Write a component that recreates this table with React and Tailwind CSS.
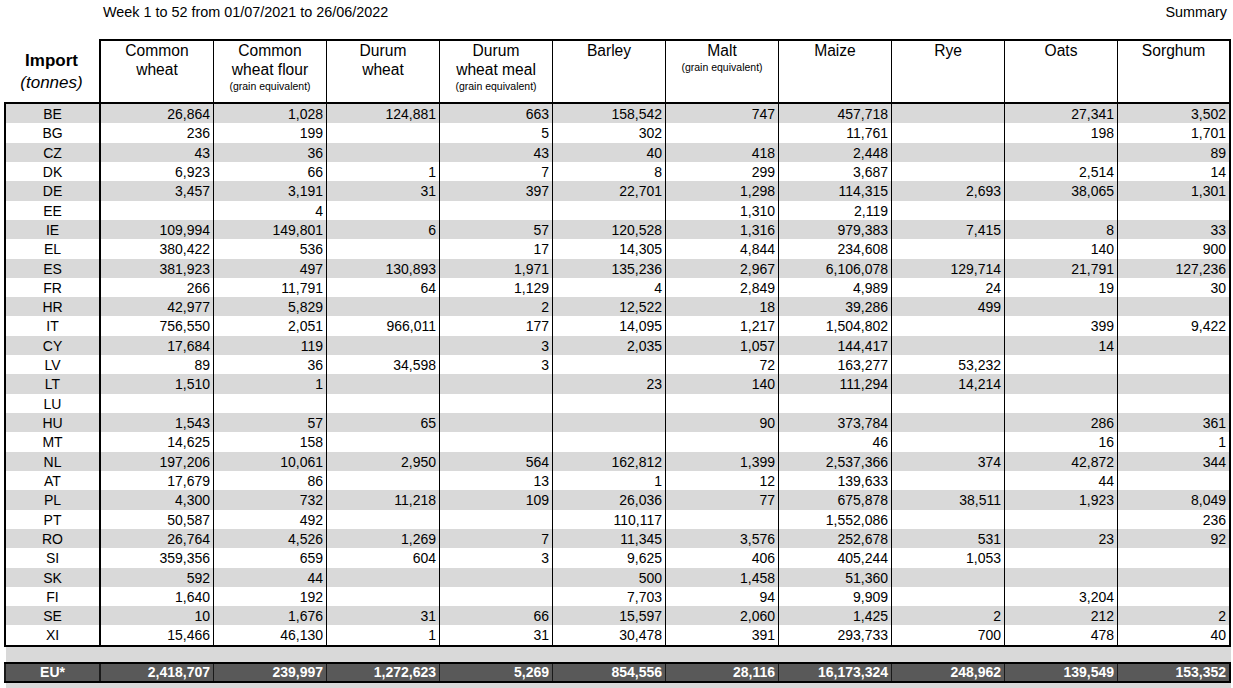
const COLUMNS = [
  { lines: ["Common", "wheat"] },
  { lines: ["Common", "wheat flour"], note: "(grain equivalent)" },
  { lines: ["Durum", "wheat"] },
  { lines: ["Durum", "wheat meal"], note: "(grain equivalent)" },
  { lines: ["Barley"] },
  { lines: ["Malt"], note: "(grain equivalent)" },
  { lines: ["Maize"] },
  { lines: ["Rye"] },
  { lines: ["Oats"] },
  { lines: ["Sorghum"] },
];

// country, then the 10 product columns (empty string = no imports)
const ROWS = [
  ["BE", "26,864", "1,028", "124,881", "663", "158,542", "747", "457,718", "", "27,341", "3,502"],
  ["BG", "236", "199", "", "5", "302", "", "11,761", "", "198", "1,701"],
  ["CZ", "43", "36", "", "43", "40", "418", "2,448", "", "", "89"],
  ["DK", "6,923", "66", "1", "7", "8", "299", "3,687", "", "2,514", "14"],
  ["DE", "3,457", "3,191", "31", "397", "22,701", "1,298", "114,315", "2,693", "38,065", "1,301"],
  ["EE", "", "4", "", "", "", "1,310", "2,119", "", "", ""],
  ["IE", "109,994", "149,801", "6", "57", "120,528", "1,316", "979,383", "7,415", "8", "33"],
  ["EL", "380,422", "536", "", "17", "14,305", "4,844", "234,608", "", "140", "900"],
  ["ES", "381,923", "497", "130,893", "1,971", "135,236", "2,967", "6,106,078", "129,714", "21,791", "127,236"],
  ["FR", "266", "11,791", "64", "1,129", "4", "2,849", "4,989", "24", "19", "30"],
  ["HR", "42,977", "5,829", "", "2", "12,522", "18", "39,286", "499", "", ""],
  ["IT", "756,550", "2,051", "966,011", "177", "14,095", "1,217", "1,504,802", "", "399", "9,422"],
  ["CY", "17,684", "119", "", "3", "2,035", "1,057", "144,417", "", "14", ""],
  ["LV", "89", "36", "34,598", "3", "", "72", "163,277", "53,232", "", ""],
  ["LT", "1,510", "1", "", "", "23", "140", "111,294", "14,214", "", ""],
  ["LU", "", "", "", "", "", "", "", "", "", ""],
  ["HU", "1,543", "57", "65", "", "", "90", "373,784", "", "286", "361"],
  ["MT", "14,625", "158", "", "", "", "", "46", "", "16", "1"],
  ["NL", "197,206", "10,061", "2,950", "564", "162,812", "1,399", "2,537,366", "374", "42,872", "344"],
  ["AT", "17,679", "86", "", "13", "1", "12", "139,633", "", "44", ""],
  ["PL", "4,300", "732", "11,218", "109", "26,036", "77", "675,878", "38,511", "1,923", "8,049"],
  ["PT", "50,587", "492", "", "", "110,117", "", "1,552,086", "", "", "236"],
  ["RO", "26,764", "4,526", "1,269", "7", "11,345", "3,576", "252,678", "531", "23", "92"],
  ["SI", "359,356", "659", "604", "3", "9,625", "406", "405,244", "1,053", "", ""],
  ["SK", "592", "44", "", "", "500", "1,458", "51,360", "", "", ""],
  ["FI", "1,640", "192", "", "", "7,703", "94", "9,909", "", "3,204", ""],
  ["SE", "10", "1,676", "31", "66", "15,597", "2,060", "1,425", "2", "212", "2"],
  ["XI", "15,466", "46,130", "1", "31", "30,478", "391", "293,733", "700", "478", "40"],
];

const TOTAL = ["EU*", "2,418,707", "239,997", "1,272,623", "5,269", "854,556", "28,116", "16,173,324", "248,962", "139,549", "153,352"];

const HeaderRow = () => (
  <div className="grid grid-cols-[95px_115px_repeat(9,113px)] border-b-2 border-black">
    <div className="h-[63px] pt-[2px] flex flex-col items-center justify-center text-[17px] leading-[22px] text-black">
      <span className="font-bold">Import</span>
      <span className="italic">(tonnes)</span>
    </div>
    {COLUMNS.map((col, i) => (
      <div
        key={i}
        className={`h-[63px] border-t-2 border-black text-center text-black ${i === 0 ? "border-l-2" : ""} ${i === COLUMNS.length - 1 ? "border-r-2" : "border-r"}`}
      >
        {col.lines.map((l) => (
          <div key={l} className="text-[15.6px] leading-[19px]">{l}</div>
        ))}
        {col.note && <div className="text-[10.5px] leading-[14px]">{col.note}</div>}
      </div>
    ))}
  </div>
);

const DataRow = ({ row, idx }) => (
  <div className={`grid grid-cols-[97px_repeat(10,113px)] h-[19.32px] text-[14px] leading-[20px] text-black ${idx % 2 === 0 ? "bg-[#d9d9d9]" : "bg-white"}`}>
    <div className="border-l-2 border-r-2 border-black text-center">{row[0]}</div>
    {row.slice(1).map((v, i) => (
      <div key={i} className={`text-right pr-[3px] border-black ${i === 9 ? "border-r-2" : "border-r"}`}>
        {v}
      </div>
    ))}
  </div>
);

const TotalRow = () => (
  <div className="grid grid-cols-[97px_repeat(10,113px)] border-y-2 border-black bg-[#595959] h-[21px] text-[14px] leading-[17px] font-bold text-white">
    <div className="border-l-2 border-r-2 border-[#1a1a1a] text-center">{TOTAL[0]}</div>
    {TOTAL.slice(1).map((v, i) => (
      <div key={i} className={`text-right pr-[3px] ${i === 9 ? "border-r-2 border-black" : "border-r border-[#1a1a1a]"}`}>
        {v}
      </div>
    ))}
  </div>
);

export default function App() {
  return (
    <div className="w-[1233px] h-[688px] overflow-hidden bg-white font-['Liberation_Sans',Arial,sans-serif]">
      <div className="h-[39px] flex justify-between pl-[103px] pr-[6px] pt-[3px] text-[14.4px] leading-[18px] text-black">
        <span>Week 1 to 52 from 01/07/2021 to 26/06/2022</span>
        <span>Summary</span>
      </div>

      <div className="ml-[4px] w-[1227px]">
        <HeaderRow />
        <div className="border-b-2 border-black">
          {ROWS.map((row, idx) => (
            <DataRow key={row[0]} row={row} idx={idx} />
          ))}
        </div>
        <div className="ml-[2px] h-[15px] bg-[#d9d9d9]" />
        <TotalRow />
        <div className="ml-[2px] h-[5px] bg-[#d9d9d9]" />
      </div>
    </div>
  );
}
